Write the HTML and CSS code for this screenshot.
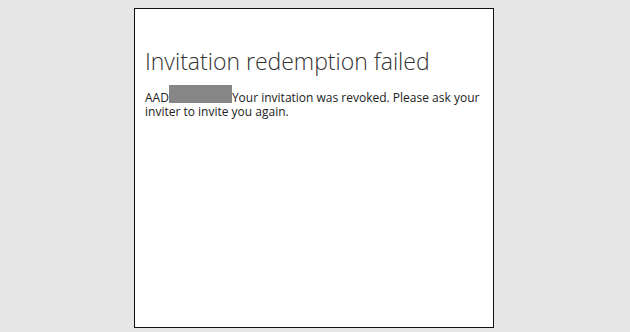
FILE: index.html
```html
<!DOCTYPE html>
<html>
<head>
<meta charset="utf-8">
<link rel="stylesheet" href="styles.css">
</head>
<body>
<div class="card">
  <h1 class="title">Invitation redemption failed</h1>
  <p class="msg">AAD<span class="redact"></span>Your invitation was revoked. Please ask your inviter to invite you again.</p>
</div>
</body>
</html>
```
FILE: styles.css
```css
html, body { margin: 0; padding: 0; }
body {
  background: #e6e6e6;
  width: 630px;
  height: 332px;
  font-family: "Open Sans", "Noto Sans", sans-serif;
}
.card {
  box-sizing: border-box;
  margin: 8px 0 0 134px;
  width: 360px;
  height: 320px;
  background: #fff;
  border: 1px solid #111;
  padding: 37px 8px 0 10px;
}
.title {
  margin: 0;
  font-weight: 300;
  font-size: 23px;
  line-height: 30px;
  color: #333;
}
.msg {
  margin: 9px 0 0;
  font-size: 12px;
  line-height: 14px;
  color: #222;
}
.redact {
  display: inline-block;
  width: 63px;
  height: 18px;
  background: #868686;
  vertical-align: -1px;
}
```
